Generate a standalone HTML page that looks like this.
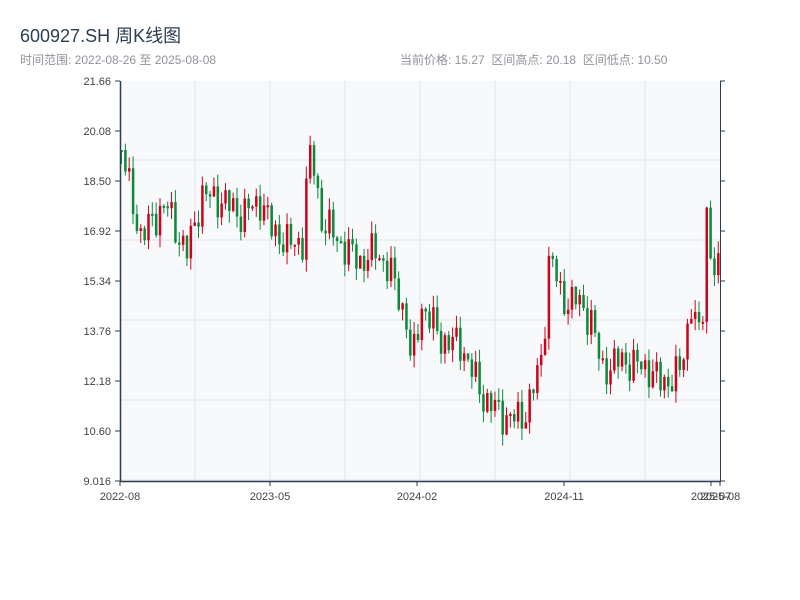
<!DOCTYPE html>
<html><head><meta charset="utf-8"><style>
body{margin:0;width:800px;height:600px;background:#fff;font-family:"Liberation Sans","Noto Sans CJK SC",sans-serif;overflow:hidden}
.t{position:absolute;left:20px;top:22px;font-size:18px;color:#2c3e50}
.s{position:absolute;top:51px;font-size:12px;color:#909399}
</style></head><body>
<div class="t">600927.SH 周K线图</div>
<div class="s" style="left:20px">时间范围: 2022-08-26 至 2025-08-08</div>
<div class="s" style="left:400px">当前价格: 15.27 &nbsp;区间高点: 20.18 &nbsp;区间低点: 10.50</div>
<svg id="c" width="800" height="600" style="position:absolute;left:0;top:0" font-family="Liberation Sans, sans-serif" font-size="11" fill="#555"></svg>
<script>
(function(){
var s=document.getElementById('c'),h='';
h+='<rect x="120" y="81" width="600" height="400" fill="#f7f9fb"/>';
for(var x=195;x<720;x+=75)h+='<line x1="'+x+'" y1="81" x2="'+x+'" y2="481" stroke="#e2e5ea"/>';
for(var y=160;y<481;y+=80)h+='<line x1="120" y1="'+y+'" x2="720" y2="'+y+'" stroke="#e2e5ea"/>';
var lab=['21.66','20.08','18.50','16.92','15.34','13.76','12.18','10.60','9.016'];
for(var i=0;i<9;i++){var yy=81+i*50;h+='<line x1="115" y1="'+yy+'" x2="120" y2="'+yy+'" stroke="#2c3e50"/><line x1="720" y1="'+yy+'" x2="725" y2="'+yy+'" stroke="#2c3e50"/><text x="111" y="'+(yy+4)+'" text-anchor="end" fill="#444">'+lab[i]+'</text>';}
var xl=[[120,'2022-08'],[270,'2023-05'],[417,'2024-02'],[564,'2024-11'],[711,'2025-07'],[720,'2025-08']];
xl.forEach(function(a){h+='<line x1="'+a[0]+'" y1="481" x2="'+a[0]+'" y2="486" stroke="#2c3e50"/><text x="'+a[0]+'" y="500" text-anchor="middle" fill="#444">'+a[1]+'</text>';});
var k=[[120,150],[125,175],[140,240],[150,220],[165,205],[185,255],[200,195],[220,200],[240,215],[260,200],[270,230],[290,245],[303,240],[305,180],[310,150],[320,220],[345,250],[360,262],[375,250],[390,275],[405,320],[410,370],[420,305],[440,340],[460,345],[480,395],[500,415],[520,420],[530,395],[540,360],[545,300],[548,250],[560,300],[575,300],[590,320],[600,370],[620,360],[650,370],[660,385],[680,370],[690,300],[700,350],[705,210],[710,260],[720,280]];
function f(x){for(var j=0;j<k.length-1;j++)if(x<=k[j+1][0]){var t=(x-k[j][0])/(k[j+1][0]-k[j][0]);return k[j][1]+t*(k[j+1][1]-k[j][1]);}return k[k.length-1][1];}
var prev=150;
for(var i=0;i<156;i++){var x=120+i*3.85;var c=f(x)+Math.sin(i*2.3)*13+Math.sin(i*5.1)*8;var o=prev;prev=c;
var tp=Math.min(o,c),bt=Math.max(o,c);if(bt-tp<2)bt=tp+2;var hi=tp-Math.abs(Math.sin(i*3.7))*12,lo=bt+Math.abs(Math.cos(i*1.9))*12;
var col=c<o?'#d0021b':'#0b8a3a';
h+='<line x1="'+(x+1.5)+'" y1="'+hi+'" x2="'+(x+1.5)+'" y2="'+lo+'" stroke="'+col+'"/><rect x="'+(x+0.3)+'" y="'+tp+'" width="2.5" height="'+(bt-tp)+'" fill="'+col+'"/>';}
h+='<line x1="120.5" y1="81" x2="120.5" y2="482" stroke="#2c3e50" stroke-width="1.5"/><line x1="120" y1="481.5" x2="721" y2="481.5" stroke="#2c3e50" stroke-width="1.5"/><line x1="720.5" y1="81" x2="720.5" y2="482" stroke="#2c3e50"/>';
s.innerHTML=h;
})();
</script>
</body></html>
